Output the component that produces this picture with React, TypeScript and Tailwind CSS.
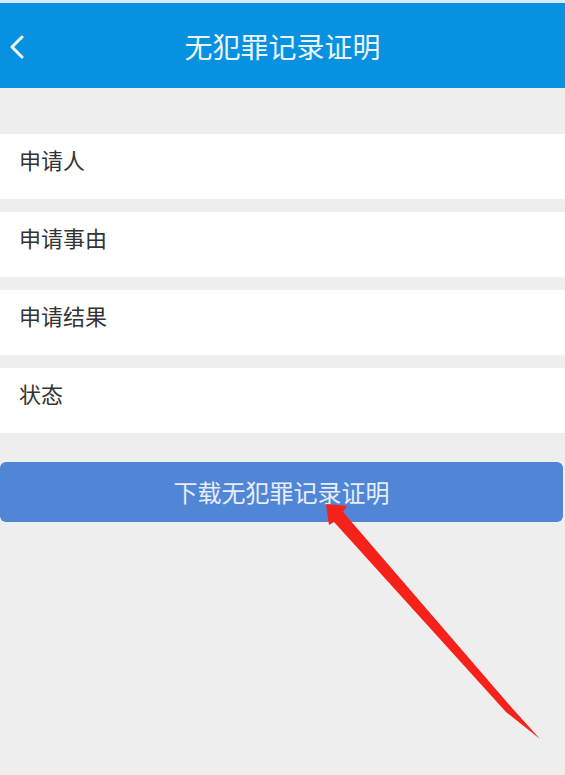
import React from "react";

const rows = ["申请人", "申请事由", "申请结果", "状态"];

export default function App() {
  return (
    <div
      className="relative w-[565px] h-[775px] bg-[#eeeeee] overflow-hidden"
      style={{ fontFamily: '"Noto Sans CJK SC", "Noto Sans", sans-serif' }}
    >
      <div className="h-[3px] bg-[#d9e9f6]" />
      <div className="relative h-[85px] bg-[#0891e0] flex items-center justify-center">
        <svg
          className="absolute left-[9px] top-[32px]"
          width="16"
          height="24"
          viewBox="0 0 16 24"
        >
          <polyline
            points="13,2 3,12 13,22"
            fill="none"
            stroke="#f2f8fd"
            strokeWidth="3"
            strokeLinecap="round"
            strokeLinejoin="round"
          />
        </svg>
        <span className="text-[28px] leading-[30px] text-[#eaf5fd]">无犯罪记录证明</span>
      </div>

      <div className="pt-[46px] flex flex-col gap-[13px]">
        {rows.map((r) => (
          <div key={r} className="h-[65px] bg-white pl-[19px] pt-[14px]">
            <span className="text-[22px] leading-[22px] text-[#333333]">{r}</span>
          </div>
        ))}
      </div>

      <div className="pt-[29px] pr-[2px]">
        <div className="h-[60px] rounded-[6px] bg-[#5186d6] flex items-center justify-center">
          <span className="text-[24px] leading-[26px] text-[#e6eefa]">下载无犯罪记录证明</span>
        </div>
      </div>

      <svg
        className="absolute left-0 top-0 pointer-events-none"
        width="565"
        height="775"
        viewBox="0 0 565 775"
      >
        <polygon
          points="326,504 347,506 343,512 512,708 540,739 506,712 334,522 329,525"
          fill="#f5211a"
        />
      </svg>
    </div>
  );
}
